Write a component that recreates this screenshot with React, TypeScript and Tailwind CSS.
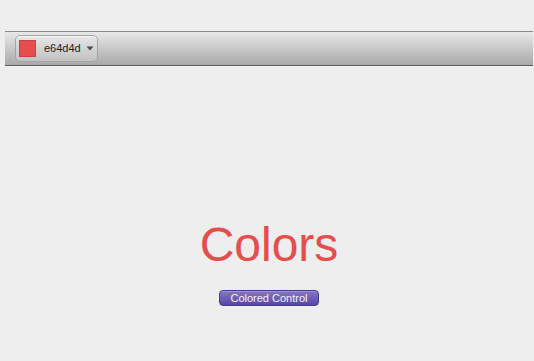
export default function App() {
    return (
        <div
            className="flex flex-col h-[361px] w-[534px] bg-[#eeeeee] pt-[31px] pl-[5px] pr-[1px]"
            style={{ fontFamily: '"Liberation Sans", Arial, sans-serif' }}
        >
            {/* toolbar */}
            <div className="flex items-center h-[35px] border-t border-b border-t-[#8a8a8a] border-b-[#5e5e5e] bg-gradient-to-b from-[#e9e9e9] to-[#a9a9a9] pl-[10px]">
                <button className="flex items-center h-[27px] w-[83px] rounded-[5px] border border-[#a4a4a4] bg-gradient-to-b from-[#e6e6e6] to-[#c2c2c2] shadow-[inset_0_1px_0_#f6f6f6] pl-[3px]">
                    <span className="block h-[17px] w-[17px] bg-[#e64d4d] border border-[#c94343]"></span>
                    <span className="ml-[8px] text-[11px] text-[#222] leading-none">e64d4d</span>
                    <svg className="ml-[5px]" width="8" height="5" viewBox="0 0 8 5">
                        <path d="M0.5 0.5 L7.5 0.5 L4 4.5 Z" fill="#4a4a4a" />
                    </svg>
                </button>
            </div>

            {/* content */}
            <div className="flex flex-col items-center">
                <div className="mt-[155px] text-[48px] leading-none text-[#e64d4d]">Colors</div>
                <button className="mt-[21px] flex items-center justify-center h-[16px] w-[100px] rounded-[4px] border border-[#473a8e] bg-gradient-to-b from-[#8675cc] to-[#5847a6] shadow-[inset_0_1px_0_#9d8fdc] text-[11px] leading-none text-[#f4f4f8]">
                    Colored Control
                </button>
            </div>
        </div>
    );
}
